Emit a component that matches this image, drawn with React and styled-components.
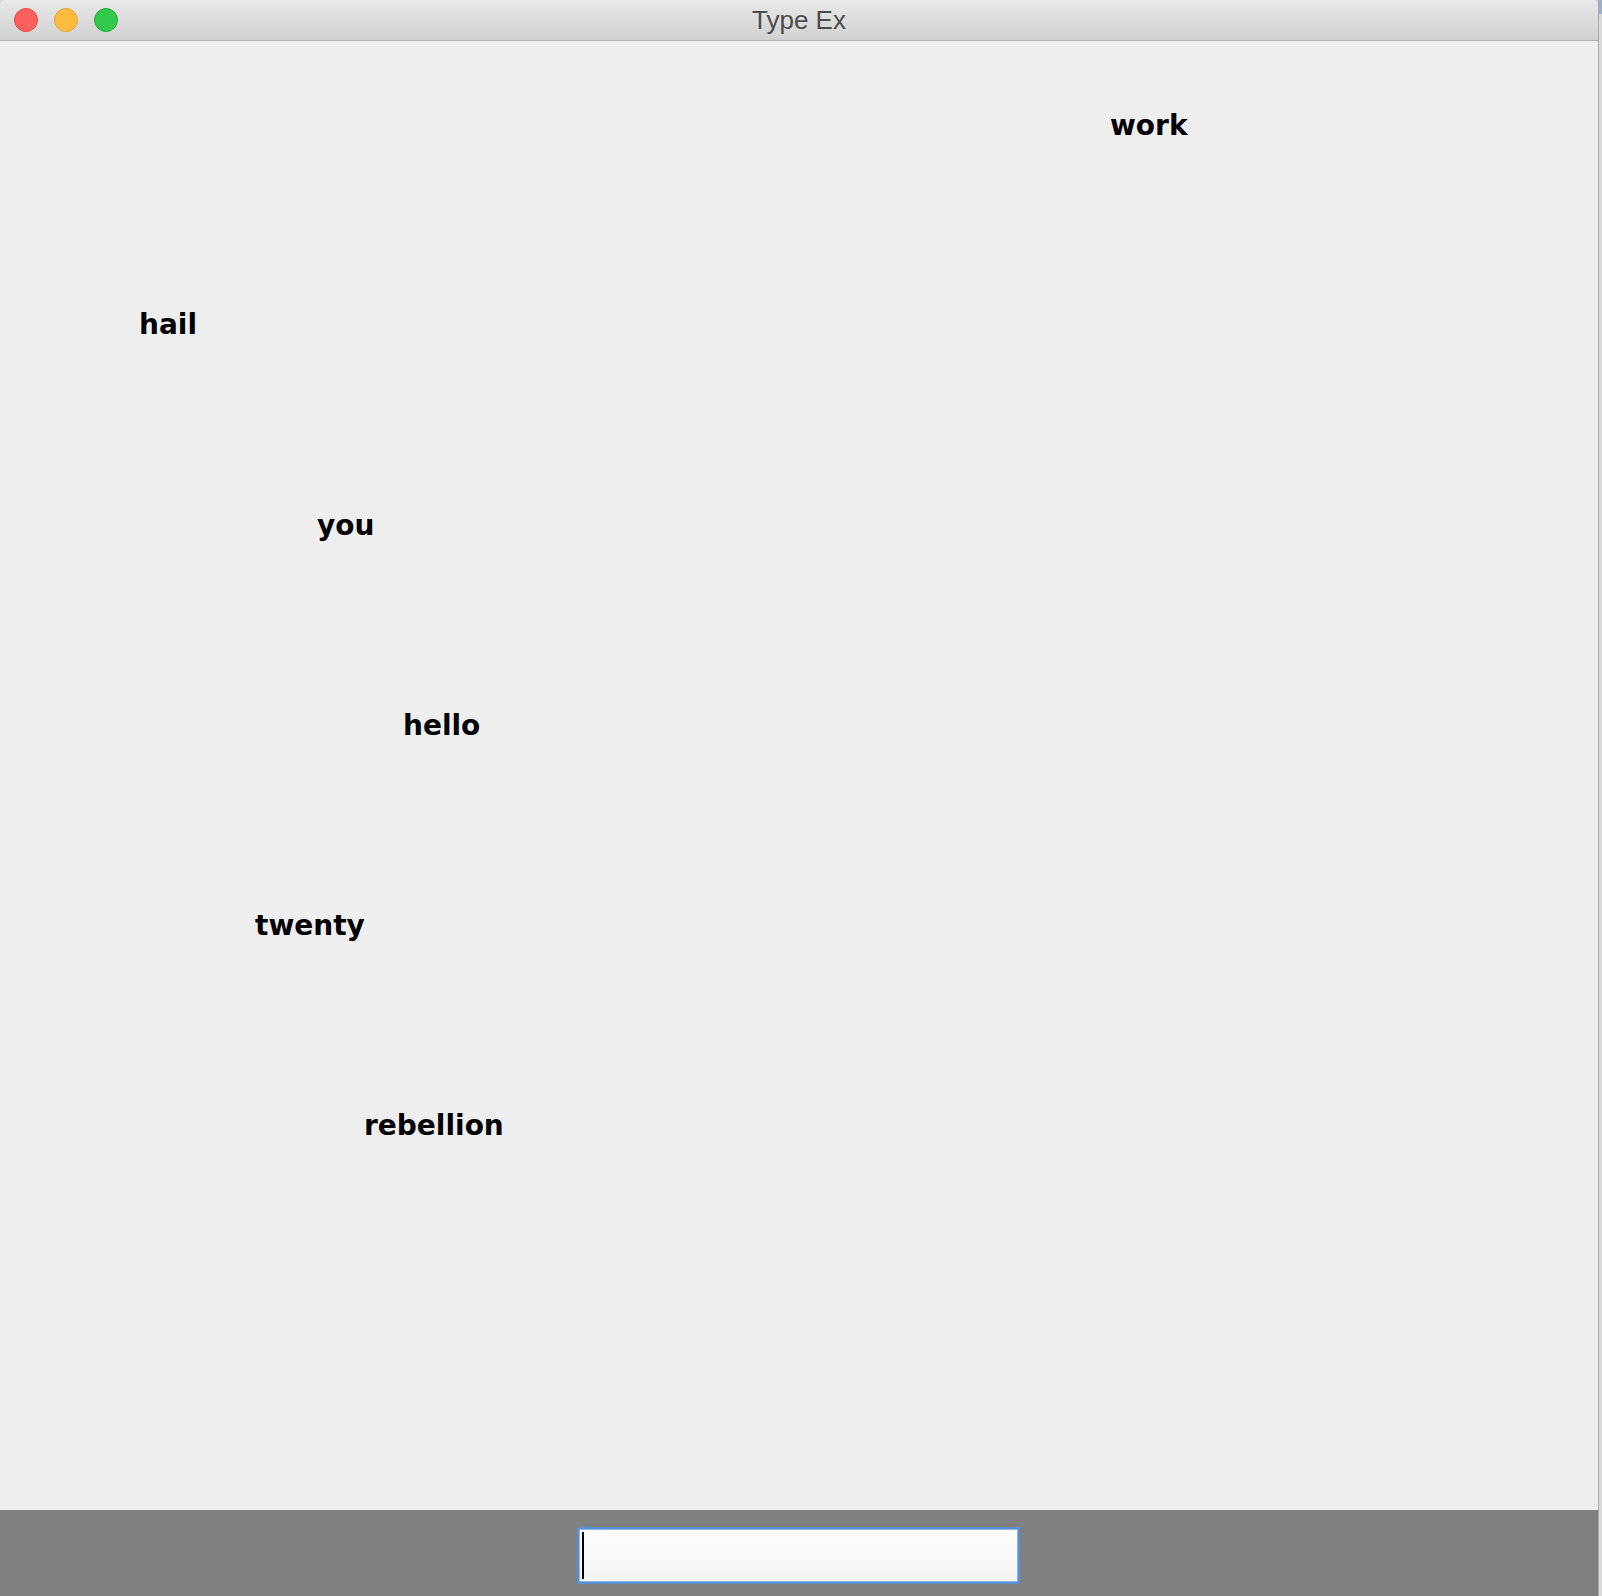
import React from "react";
import styled, { createGlobalStyle } from "styled-components";

const Global = createGlobalStyle`
  html, body { margin: 0; padding: 0; background: #d6d6d6; }
  body { width: 1602px; height: 1596px; overflow: hidden; }
`;

const Screen = styled.div`
  display: flex;
  width: 1602px;
  height: 1596px;
`;

const Window = styled.div`
  display: flex;
  flex-direction: column;
  width: 1598px;
  height: 1596px;
  background: #eeeeee;
  border-top-left-radius: 6px;
  border-top-right-radius: 6px;
  overflow: hidden;
`;

const TitleBar = styled.div`
  position: relative;
  display: flex;
  align-items: center;
  height: 40px;
  flex-shrink: 0;
  padding-left: 14px;
  gap: 16px;
  background: linear-gradient(#e9e8e9, #d2d1d2);
  border-bottom: 1px solid #b0b0b0;
`;

const Light = styled.span`
  width: 22px;
  height: 22px;
  border-radius: 50%;
  background: ${(p) => p.$fill};
  border: 1px solid ${(p) => p.$edge};
  margin-top: 0px;
`;

const Title = styled.div`
  position: absolute;
  left: 0;
  right: 0;
  top: 0;
  height: 40px;
  display: flex;
  justify-content: center;
  align-items: center;
  font-family: "Liberation Sans", Arial, sans-serif;
  font-size: 26px;
  color: #4c4c4c;
  pointer-events: none;
  padding-top: 1px;
  box-sizing: border-box;
`;

const Canvas = styled.div`
  position: relative;
  flex: 1;
  background: #eeeeee;
`;

const Word = styled.span`
  position: absolute;
  font-family: "DejaVu Sans", Verdana, sans-serif;
  font-weight: bold;
  font-size: 28px;
  line-height: 1;
  color: #000;
  white-space: nowrap;
`;

const BottomBar = styled.div`
  display: flex;
  justify-content: center;
  align-items: flex-start;
  height: 86px;
  flex-shrink: 0;
  padding-top: 17px;
  box-sizing: border-box;
  background: #808080;
`;

const InputBox = styled.div`
  display: flex;
  align-items: stretch;
  width: 433px;
  height: 49px;
  padding: 2px 3px;
  box-sizing: content-box;
  border: 2px solid #5a8fd4;
  border-radius: 1px;
  background: linear-gradient(#fdfdfd, #f4f4f4);
  box-shadow: 0 0 0 1px #8fb6e8 inset;
  margin-left: -2px;
`;

const Caret = styled.span`
  width: 2px;
  margin-top: 1px;
  margin-bottom: 1px;
  background: #000;
`;

const DesktopStrip = styled.div`
  display: flex;
  flex-direction: column;
  width: 4px;
  height: 1596px;
  border-left: 1px solid #a9a9a9;
  box-sizing: border-box;
  background: #dadada;
`;

const StripTop = styled.div`
  height: 14px;
  background: #9fb0c2;
`;

const words = [
  { text: "work", x: 1110, top: 71 },
  { text: "hail", x: 139, top: 270 },
  { text: "you", x: 317, top: 471 },
  { text: "hello", x: 403, top: 671 },
  { text: "twenty", x: 255, top: 871 },
  { text: "rebellion", x: 364, top: 1071 },
];

export default function App() {
  return (
    <>
      <Global />
      <Screen>
        <Window>
          <TitleBar>
            <Light $fill="#fc605c" $edge="#de4a43" />
            <Light $fill="#fdbc40" $edge="#dea236" />
            <Light $fill="#34c84a" $edge="#27aa35" />
            <Title>Type Ex</Title>
          </TitleBar>
          <Canvas>
            {words.map((w) => (
              <Word key={w.text} style={{ left: w.x, top: w.top }}>
                {w.text}
              </Word>
            ))}
          </Canvas>
          <BottomBar>
            <InputBox>
              <Caret />
            </InputBox>
          </BottomBar>
        </Window>
        <DesktopStrip>
          <StripTop />
        </DesktopStrip>
      </Screen>
    </>
  );
}
